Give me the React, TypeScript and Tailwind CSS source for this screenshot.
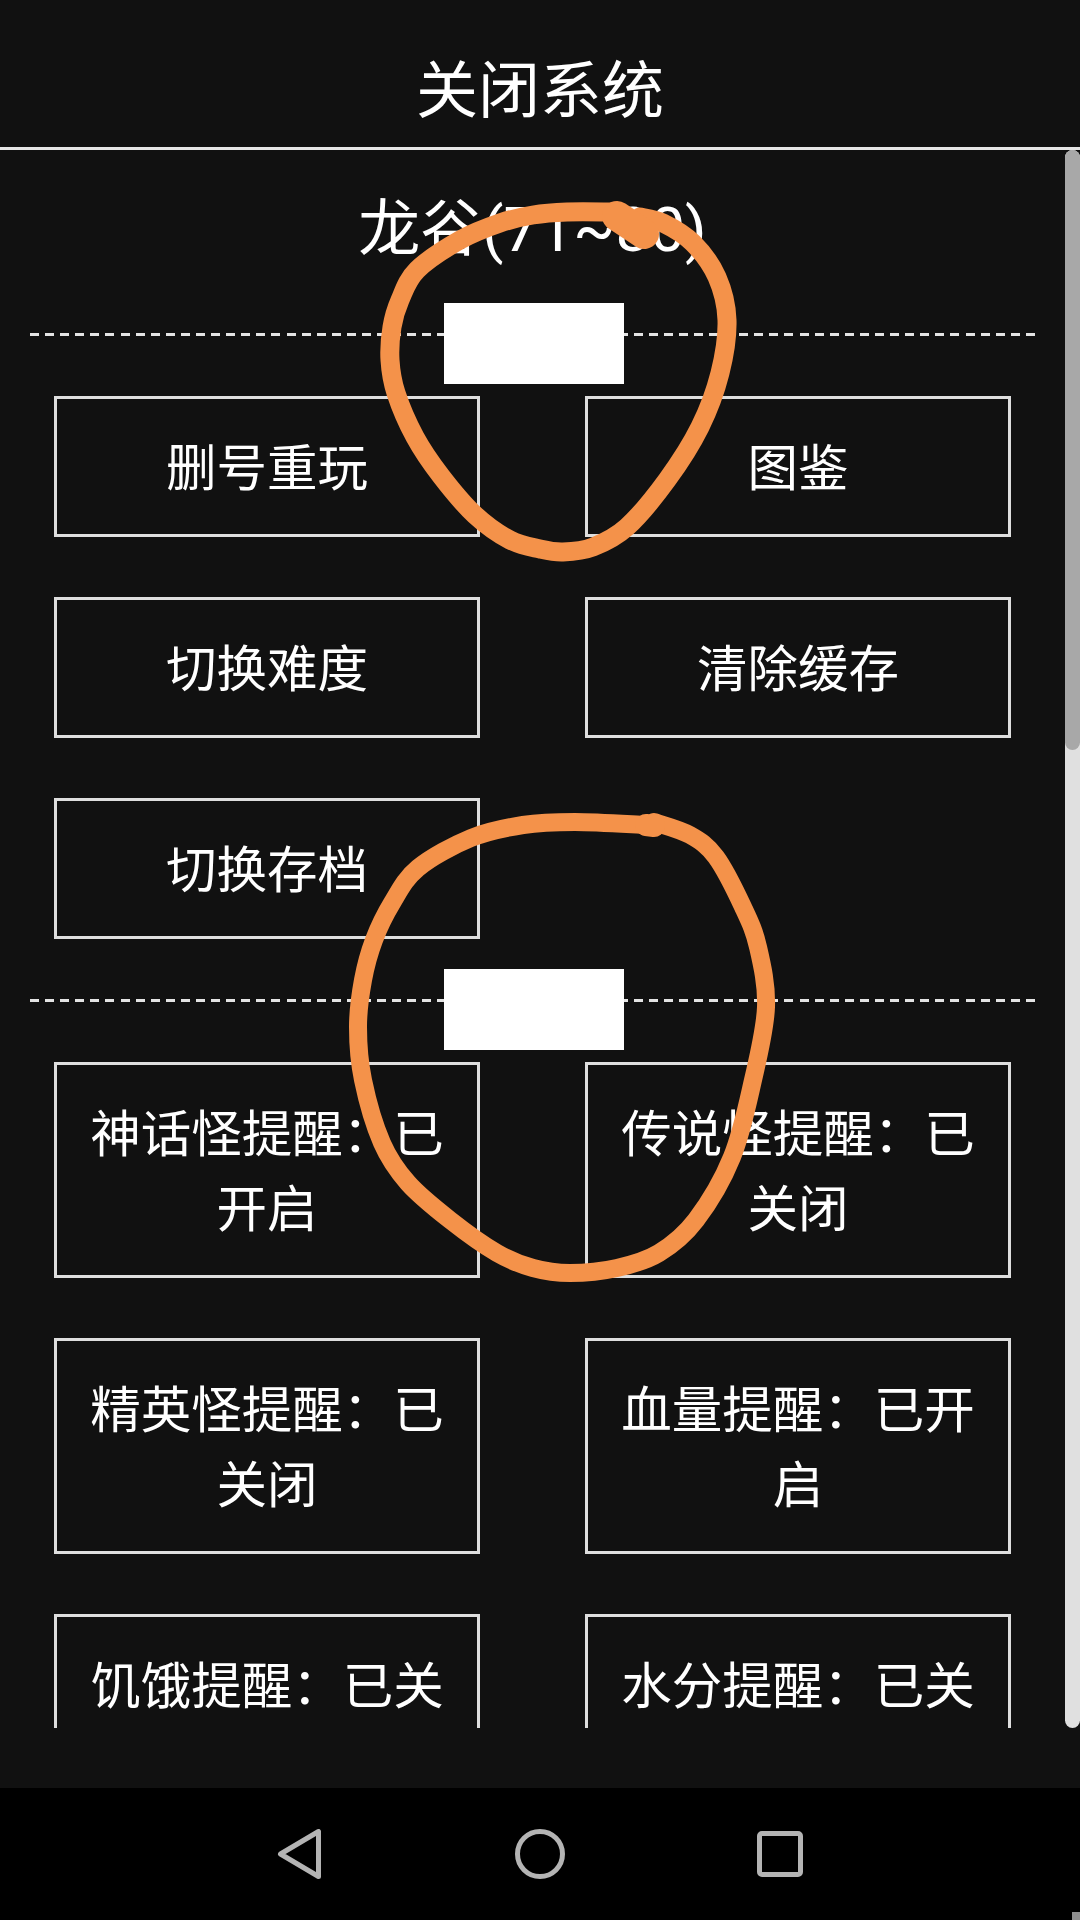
const firstRow = ["删号重玩", "图鉴", "切换难度", "清除缓存", "切换存档"];
const secondRow = [
  "神话怪提醒：已开启",
  "传说怪提醒：已关闭",
  "精英怪提醒：已关闭",
  "血量提醒：已开启",
  "饥饿提醒：已关闭",
  "水分提醒：已关闭",
];

type Point = [number, number];

// hand drawn rings, traced from the picture
const ringTop: Point[] = [
  [612, 212], [567, 212], [533, 215], [500, 223], [460, 240], [417, 270], [400, 300], [392, 327],
  [390, 360], [396, 393], [415, 437], [441, 476], [475, 515], [510, 540], [540, 549], [563, 552],
  [593, 547], [627, 527], [667, 480], [700, 427], [720, 373], [727, 320], [717, 277], [693, 243],
  [663, 223], [640, 217],
];
const ringBottom: Point[] = [
  [646, 825], [575, 822], [523, 825], [471, 838], [418, 868], [392, 903], [374, 940], [363, 980],
  [358, 1027], [363, 1080], [382, 1143], [408, 1183], [450, 1220], [497, 1253], [533, 1268], [570, 1273],
  [617, 1268], [659, 1253], [696, 1220], [732, 1157], [753, 1080], [766, 1007], [758, 947], [743, 907],
  [716, 857], [690, 835], [654, 822],
];

// catmull-rom through the points, so the line stays on the trace
function smoothPath(points: Point[]) {
  let d = `M${points[0][0]} ${points[0][1]}`;
  for (let i = 0; i < points.length - 1; i++) {
    const p0 = points[Math.max(i - 1, 0)];
    const p1 = points[i];
    const p2 = points[i + 1];
    const p3 = points[Math.min(i + 2, points.length - 1)];
    const c1x = p1[0] + (p2[0] - p0[0]) / 6;
    const c1y = p1[1] + (p2[1] - p0[1]) / 6;
    const c2x = p2[0] - (p3[0] - p1[0]) / 6;
    const c2y = p2[1] - (p3[1] - p1[1]) / 6;
    d += ` C${c1x} ${c1y} ${c2x} ${c2y} ${p2[0]} ${p2[1]}`;
  }
  return d;
}

function GridButton({ label }: { label: string }) {
  return (
    <div className="border-[3px] border-[#dedede] px-[12px] pb-[28px] pt-[32px] text-center text-[50.5px] leading-[75px] text-white">
      {label}
    </div>
  );
}

function Divider() {
  return (
    <div className="relative my-[60px] h-[3px] bg-[repeating-linear-gradient(90deg,#e4e4e4_0_9px,transparent_9px_15.09px)]">
      <div className="absolute left-[414px] top-[-30px] h-[81px] w-[180px] bg-white" />
    </div>
  );
}

function Rings() {
  return (
    <svg className="pointer-events-none absolute inset-0" width="1080" height="1920" fill="none">
      <g stroke="#f4924a" strokeLinecap="round" strokeLinejoin="round">
        <path d={smoothPath(ringTop)} strokeWidth="19" />
        <path d="M617 216 L644 234" strokeWidth="30" />
        <path d={smoothPath(ringBottom)} strokeWidth="18" />
        <path d="M646 825 L654 826" strokeWidth="22" />
      </g>
    </svg>
  );
}

function NavBar() {
  return (
    <div className="flex h-[132px] items-center justify-center gap-[190px] bg-black">
      <svg width="50" height="50" viewBox="0 0 50 50" fill="none" stroke="#b4b4b4" strokeWidth="5" strokeLinejoin="round">
        <path d="M5.5 25 L43.5 2.5 V47.5 Z" />
      </svg>
      <svg width="50" height="50" viewBox="0 0 50 50" fill="none" stroke="#b4b4b4" strokeWidth="5">
        <circle cx="25" cy="25" r="22.5" />
      </svg>
      <svg width="50" height="50" viewBox="0 0 50 50" fill="none" stroke="#b4b4b4" strokeWidth="5">
        <rect x="4.5" y="4.5" width="41" height="41" rx="2.5" />
      </svg>
    </div>
  );
}

export default function App() {
  return (
    <div className="relative flex h-[1920px] w-[1080px] flex-col overflow-hidden bg-[#111111] font-['Roboto','Noto_Sans_CJK_SC',sans-serif]">
      <div className="h-[150px] shrink-0 border-b-[3px] border-[#e6e6e6] pt-[45px] text-center text-[62px] leading-[94px] text-white">
        关闭系统
      </div>

      <div className="flex h-[1578px] shrink-0">
        <div className="min-w-0 flex-1 overflow-hidden px-[30px] pt-[33px]">
          <div className="h-[90px] text-center text-[62px] leading-[94px] text-white">龙谷(71~80)</div>
          <Divider />
          <div className="grid grid-cols-2 gap-x-[105px] gap-y-[60px] px-[24px]">
            {firstRow.map((label) => (
              <GridButton key={label} label={label} />
            ))}
          </div>
          <Divider />
          <div className="grid grid-cols-2 gap-x-[105px] gap-y-[60px] px-[24px]">
            {secondRow.map((label) => (
              <GridButton key={label} label={label} />
            ))}
          </div>
        </div>
        <div className="h-full w-[15px] shrink-0 rounded-full bg-[#e0e0e0]">
          <div className="h-[600px] rounded-full bg-[#a8a8a8]" />
        </div>
      </div>

      <div className="h-[60px] shrink-0" />
      <NavBar />

      <Rings />
      <div className="absolute bottom-0 right-0 h-2 w-2 bg-[#8f8f8f]" />
    </div>
  );
}
